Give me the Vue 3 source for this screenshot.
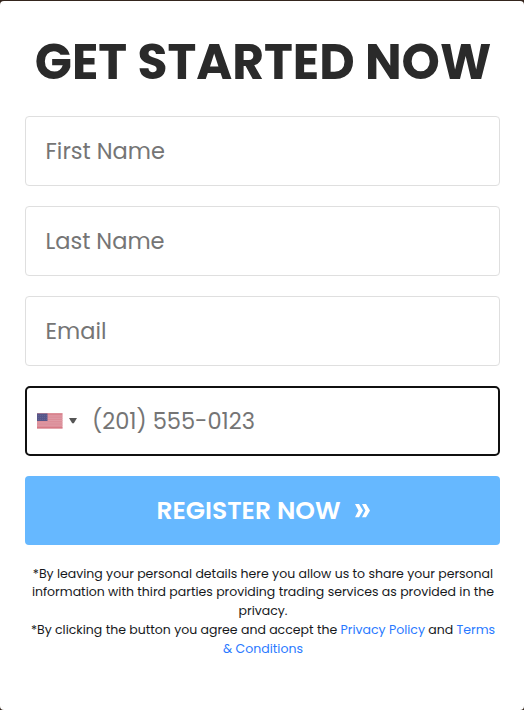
<script setup>
import { ref } from 'vue';

const form = ref({
  firstName: '',
  lastName: '',
  email: '',
  phone: ''
});
</script>

<template>
  <div class="page">
    <form class="card" @submit.prevent>
      <h1>GET STARTED NOW</h1>

      <input v-model="form.firstName" class="field" type="text" placeholder="First Name" />
      <input v-model="form.lastName" class="field" type="text" placeholder="Last Name" />
      <input v-model="form.email" class="field" type="email" placeholder="Email" />

      <div class="field phone">
        <button class="country" type="button" aria-label="Select country">
          <svg class="flag" width="26" height="16" viewBox="0 0 26 16">
            <rect width="25.5" height="15" y=".5" fill="#dc8d98" />
            <path d="M0 3h25.5M0 5.3h25.5M0 7.6h25.5M0 9.9h25.5M0 12.2h25.5" stroke="#dfa0aa" stroke-width="0.8" />
            <path d="M0 .8h25.5M0 14.9h25.5" stroke="#cf6472" stroke-width="0.8" />
            <rect y=".5" width="10.5" height="7.5" fill="#56568a" />
            <path d="M1 2.5h9M1 4.5h9M1 6.5h9" stroke="#6b6b98" stroke-width="0.6" stroke-dasharray="1 1" />
          </svg>
          <svg width="8" height="6" viewBox="0 0 8 6">
            <path d="M0 0h8L4.8 5.3H3.2z" fill="#555" />
          </svg>
        </button>
        <input v-model="form.phone" type="tel" placeholder="(201) 555-0123" />
      </div>

      <button class="submit" type="submit">
        <span>REGISTER NOW</span>
        <svg width="15" height="14" viewBox="0 0 15 14">
          <path d="M0 0h4l4 6.6-4 6.6H0l3.5-6.6zM7 0h4l4 6.6-4 6.6H7l3.5-6.6z" fill="#fff" />
        </svg>
      </button>

      <div class="terms">
        <p>*By leaving your personal details here you allow us to share your personal information with third parties providing trading services as provided in the privacy.</p>
        <p>*By clicking the button you agree and accept the <a href="#">Privacy Policy</a> and <a href="#">Terms &amp; Conditions</a></p>
      </div>
    </form>
  </div>
</template>

<style>
body {
  margin: 0;
  background: #34251d;
}
</style>

<style scoped>
.page {
  height: 710px;
  padding-top: 1px;
  box-sizing: border-box;
  overflow: hidden;
  font-family: Poppins, Inter, sans-serif;
}

.card {
  height: 709px;
  box-sizing: border-box;
  padding: 25px 24px 0 25px;
  background: #fff;
  border-radius: 4px;
}

h1 {
  height: 72px;
  margin: 0 0 18px;
  padding-left: 1px;
  line-height: 73px;
  font-size: 48.75px;
  font-weight: 700;
  text-align: center;
  white-space: nowrap;
  color: #2a2a2a;
}

.field {
  display: block;
  width: 100%;
  height: 70px;
  box-sizing: border-box;
  margin: 0 0 20px;
  padding: 0 19.5px;
  border: 1px solid #dfdfdf;
  border-radius: 4px;
  background: #fff;
  outline: none;
}

input {
  font-family: inherit;
  font-size: 22.5px;
  color: #333;
}

input::placeholder {
  color: #757575;
  opacity: 1;
}

.phone {
  display: flex;
  align-items: center;
  padding: 0 10px;
  border: 2px solid #101010;
  border-radius: 5px;
}

.phone input {
  flex: 1;
  min-width: 0;
  padding: 0;
  border: 0;
  outline: none;
  background: transparent;
}

.country {
  display: flex;
  align-items: center;
  gap: 6px;
  width: 55px;
  padding: 0;
  border: 0;
  background: none;
}

.submit {
  display: flex;
  justify-content: center;
  align-items: center;
  gap: 14px;
  width: 100%;
  height: 69px;
  padding: 0 0 0 1px;
  border: 0;
  border-radius: 4px;
  background: #66b8ff;
  color: #fff;
  font-family: inherit;
  font-size: 25px;
  font-weight: 600;
}

.terms {
  padding: 19.6px 0 0 1px;
  font-size: 12.5px;
  line-height: 18.75px;
  text-align: center;
  color: #16181b;
}

.terms p {
  margin: 0;
}

.terms a {
  color: #2979ff;
  text-decoration: none;
}
</style>
